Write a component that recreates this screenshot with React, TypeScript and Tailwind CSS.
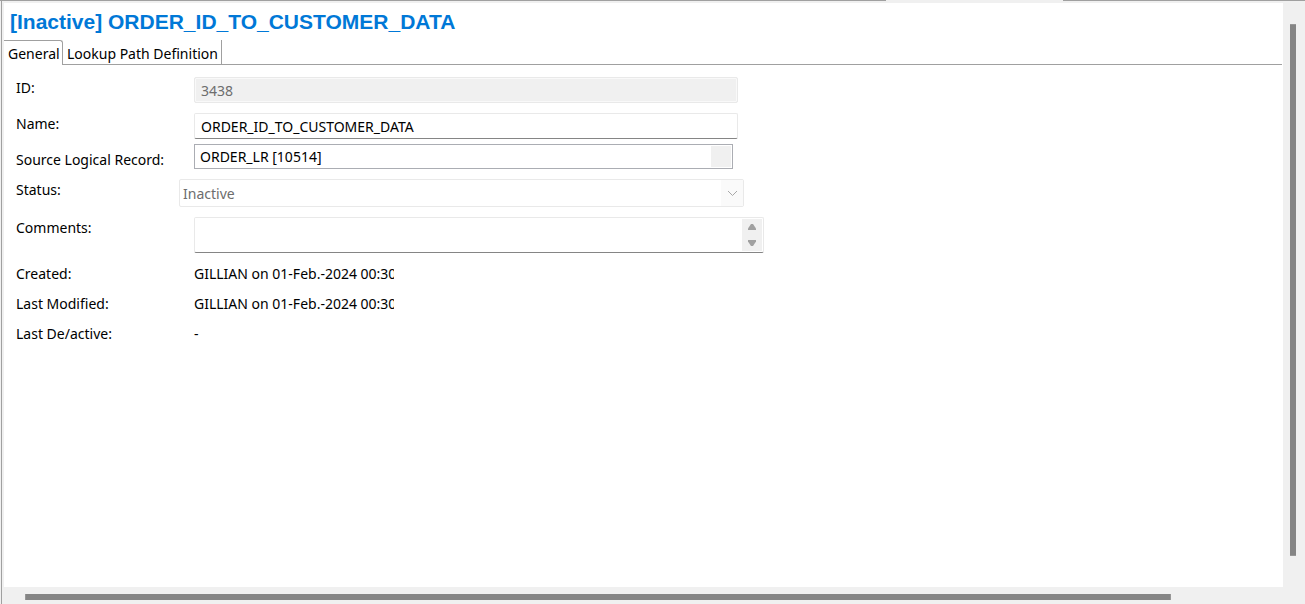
import { useState, type ReactNode } from "react";

function Row({
  label,
  htmlFor,
  className,
  labelClass = "pt-px",
  children,
}: {
  label: string;
  htmlFor?: string;
  className: string;
  labelClass?: string;
  children: ReactNode;
}) {
  const text = `w-[178px] shrink-0 ${labelClass}`;
  return (
    <div className={`flex items-start ${className}`}>
      {htmlFor ? (
        <label htmlFor={htmlFor} className={text}>{label}</label>
      ) : (
        <span className={text}>{label}</span>
      )}
      {children}
    </div>
  );
}

export default function App() {
  const [tab, setTab] = useState("general");
  const [name, setName] = useState("ORDER_ID_TO_CUSTOMER_DATA");
  const [source, setSource] = useState("ORDER_LR [10514]");

  return (
    <div className="flex h-screen flex-col overflow-hidden bg-[#f0f0f0] font-['Noto_Sans',sans-serif] text-sm text-black">
      <div className="flex h-px shrink-0">
        <div className="w-[886px] bg-[#a0a0a0]" />
        <div className="w-[177px]" />
        <div className="flex-1 bg-[#a0a0a0]" />
      </div>
      <div className="ml-px flex min-h-0 flex-1 flex-col border-l border-[#a0a0a0] pl-0.5 pt-0.5">
        <div className="flex min-h-0 flex-1">
          <main className="min-w-0 flex-1 bg-white">
            <h1 className="h-9 truncate pl-1.5 pt-1 font-['Liberation_Sans',sans-serif] text-[21px] font-bold leading-[30px] text-[#0078d7]">
              [Inactive] ORDER_ID_TO_CUSTOMER_DATA
            </h1>
            <div role="tablist" className="mr-px flex h-[26px] items-stretch">
              <button
                role="tab"
                aria-selected={tab === "general"}
                onClick={() => setTab("general")}
                className="mt-px w-[59px] whitespace-nowrap rounded-tr-[3px] border-r border-t border-[#a0a0a0] pl-1 pt-px text-left"
              >
                General
              </button>
              <button
                role="tab"
                aria-selected={tab === "lookup"}
                onClick={() => setTab("lookup")}
                className="mt-px w-[159px] whitespace-nowrap border-b border-r border-[#a0a0a0] pl-1 pt-[3px] text-left"
              >
                Lookup Path Definition
              </button>
              <div className="flex-1 border-b border-[#a0a0a0]" />
            </div>
            <form className="pl-3 pt-3 leading-5" onSubmit={(e) => e.preventDefault()}>
              <Row label="ID:" htmlFor="id" className="h-9">
                <input
                  id="id"
                  disabled
                  value="3438"
                  className="h-[26px] w-[544px] rounded-xs border border-[#e9e9e9] bg-[#f0f0f0] px-1.5 text-[#6d6d6d] shadow-[inset_0_0_0_1px_#f9f9f9]"
                />
              </Row>
              <Row label="Name:" htmlFor="name" className="h-[31px]">
                <input
                  id="name"
                  value={name}
                  onChange={(e) => setName(e.target.value)}
                  className="h-[26px] w-[544px] rounded-xs border border-[#e9e9e9] border-b-[#858585] px-1.5 outline-none"
                />
              </Row>
              <Row label="Source Logical Record:" htmlFor="source" className="h-[35px]" labelClass="pt-1.5">
                <div className="flex h-[25px] w-[539px] border border-[#abadb3] p-px">
                  <input
                    id="source"
                    value={source}
                    onChange={(e) => setSource(e.target.value)}
                    className="min-w-0 flex-1 pl-1 outline-none"
                  />
                  <button type="button" aria-label="Choose logical record" className="w-5 bg-[#f0f0f0]" />
                </div>
              </Row>
              <Row label="Status:" htmlFor="status" className="h-[38px]">
                <div className="-ml-[15px] grid h-7 w-[565px] grid-cols-[1fr_22px] rounded-xs border border-[#e9e9e9]">
                  <select
                    id="status"
                    disabled
                    className="col-span-2 col-start-1 row-start-1 appearance-none bg-transparent pl-[3px] pt-px text-[#6d6d6d] opacity-100"
                  >
                    <option>Inactive</option>
                  </select>
                  <div className="pointer-events-none col-start-2 row-start-1 flex items-center justify-center bg-[#fafafa]">
                    <svg width="11" height="7" viewBox="0 0 11 7" fill="none" stroke="#a8a8a8">
                      <path d="M1 1 5.5 5.5 10 1" />
                    </svg>
                  </div>
                </div>
              </Row>
              <Row label="Comments:" htmlFor="comments" className="h-[46px]">
                <div className="flex h-9 w-[570px] rounded-xs border border-[#e9e9e9] border-b-[#858585] p-px">
                  <textarea
                    id="comments"
                    className="min-w-0 flex-1 resize-none overflow-hidden px-1 outline-none"
                  />
                  <div className="flex w-5 flex-col items-center justify-between bg-[#f0f0f0] py-[5px]">
                    <svg width="8" height="6" viewBox="0 0 8 6" fill="#a0a0a0">
                      <path d="M3 0h2l3 4.5V6H0V4.5z" />
                    </svg>
                    <svg width="8" height="6" viewBox="0 0 8 6" fill="#a0a0a0">
                      <path d="M0 0h8v1.5L5 6H3L0 1.5z" />
                    </svg>
                  </div>
                </div>
              </Row>
              <Row label="Created:" className="h-[30px]">
                <span className="w-[200px] overflow-hidden whitespace-nowrap pt-px">GILLIAN on 01-Feb.-2024 00:30</span>
              </Row>
              <Row label="Last Modified:" className="h-[30px]">
                <span className="w-[200px] overflow-hidden whitespace-nowrap pt-px">GILLIAN on 01-Feb.-2024 00:30</span>
              </Row>
              <Row label="Last De/active:" className="h-[30px]">
                <span className="w-[200px] pt-px">-</span>
              </Row>
            </form>
          </main>
          <div className="w-[22px] shrink-0 pb-[31px] pl-[7px] pt-[21px]">
            <div className="h-full w-1.5 border-y border-[#979797] bg-[#858585]" />
          </div>
        </div>
        <div className="h-[17px] shrink-0 pl-[21px] pr-[134px] pt-[7px]">
          <div className="h-1.5 border-x border-[#979797] bg-[#858585]" />
        </div>
      </div>
    </div>
  );
}
